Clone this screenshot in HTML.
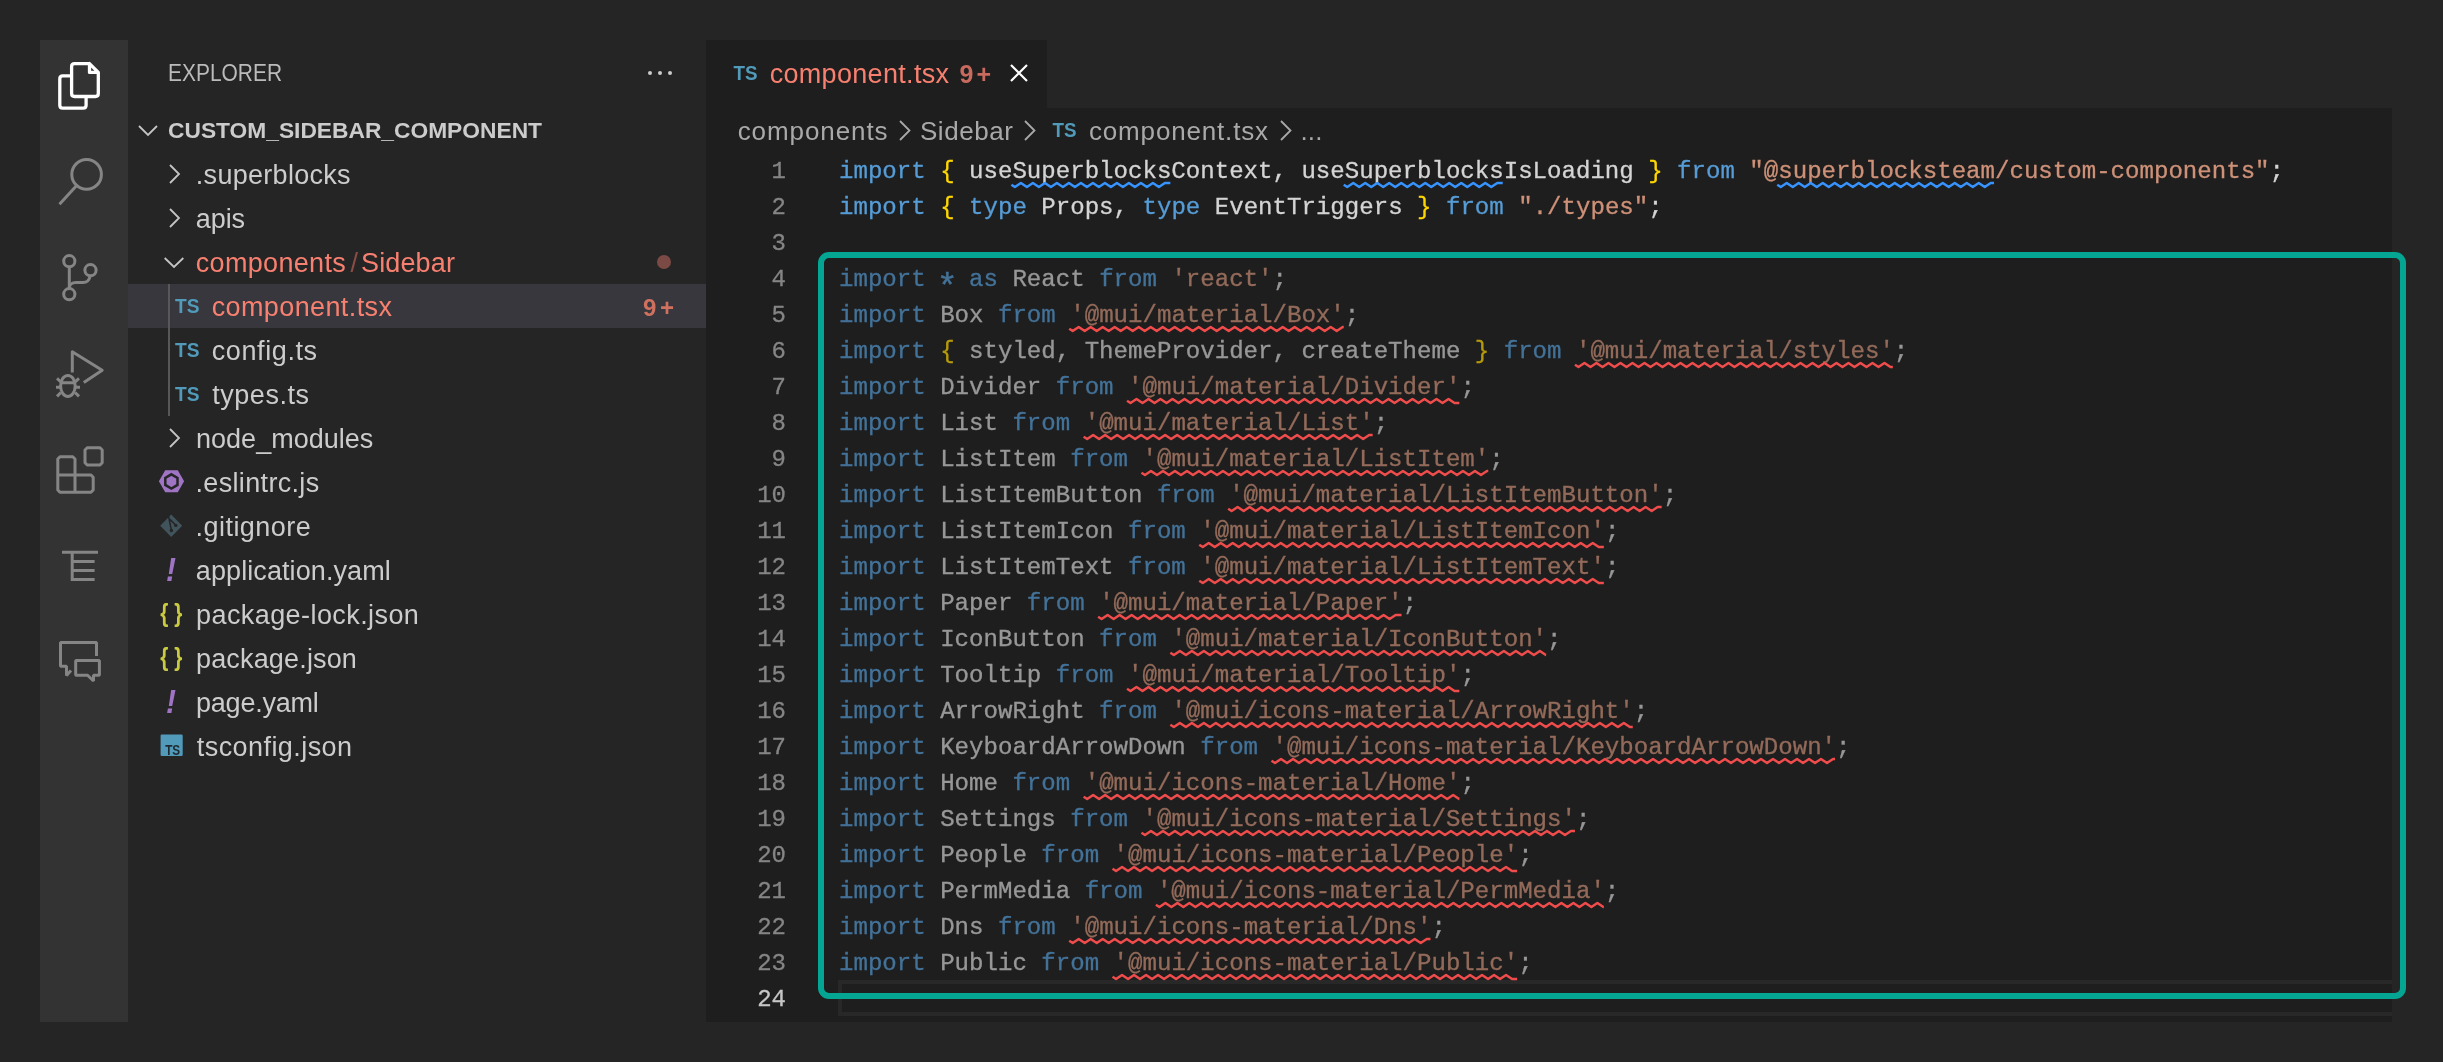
<!DOCTYPE html>
<html><head><meta charset="utf-8">
<style>
html,body{margin:0;padding:0;}
body{width:2443px;height:1062px;background:#252526;position:relative;overflow:hidden;font-family:"Liberation Sans",sans-serif;}
.abs{position:absolute;}
#act{left:40px;top:40px;width:88px;height:982px;background:#333333;}
#side{left:128px;top:40px;width:578px;height:982px;background:#252526;}
#tabs{left:706px;top:40px;width:1686px;height:68px;background:#252526;}
#tab{left:706px;top:40px;width:341px;height:68px;background:#1e1e1e;}
#ed{left:706px;top:108px;width:1686px;height:914px;background:#1e1e1e;}
.st{position:absolute;white-space:pre;font-size:26px;color:#cccccc;line-height:44px;height:44px;}
.ln{position:absolute;left:839px;height:36px;line-height:36px;white-space:pre;font-family:"Liberation Mono",monospace;font-size:24.08px;-webkit-text-stroke:0.3px;}
.num{position:absolute;left:706px;width:80px;-webkit-text-stroke:0.3px;text-align:right;height:36px;line-height:36px;font-family:"Liberation Mono",monospace;font-size:24px;color:#858585;}
.num.act{color:#c6c6c6;}
.k{color:#569cd6}.t{color:#d4d4d4}.y{color:#ffd700}.s{color:#ce9178}
.dim span{opacity:0.667}
.bc{position:absolute;top:108px;height:46px;line-height:46px;font-size:26px;color:#a9a9a9;white-space:pre;}
.ts{position:absolute;font-weight:bold;color:#519aba;font-size:19px;letter-spacing:0px;}
</style></head><body>
<div id="wrap" style="position:absolute;left:0;top:0;width:2443px;height:1062px;will-change:transform">
<div id="act" class="abs"></div>
<div id="side" class="abs"></div>
<div id="tabs" class="abs"></div>
<div id="tab" class="abs"></div>
<div id="ed" class="abs"></div>

<!-- current line border -->
<div class="abs" style="left:838px;top:980px;width:1554px;height:36px;box-sizing:border-box;border:4px solid #282828;border-right:none;"></div>
<div class="abs" style="left:706px;top:108px;width:1686px;height:0px;"></div>

<!-- sidebar texts -->
<div class="abs" style="left:128px;top:284px;width:578px;height:44px;background:#37373d;"></div>
<div class="abs" style="left:168px;top:284px;width:2px;height:132px;background:#585858;"></div>
<div class="abs" style="left:656.8px;top:254.8px;width:14.4px;height:14.4px;border-radius:50%;background:#7c4a45;"></div>

<!-- tab -->

<!-- breadcrumbs -->

<div class="ln" style="top:154px"><span class="k">import</span><span class="t"> </span><span class="y">{</span><span class="t"> useSuperblocksContext, useSuperblocksIsLoading </span><span class="y">}</span><span class="t"> </span><span class="k">from</span><span class="t"> </span><span class="s">&quot;@superblocksteam/custom-components&quot;</span><span class="t">;</span></div>
<div class="num" style="top:154px">1</div>
<div class="ln" style="top:190px"><span class="k">import</span><span class="t"> </span><span class="y">{</span><span class="t"> </span><span class="k">type</span><span class="t"> Props, </span><span class="k">type</span><span class="t"> EventTriggers </span><span class="y">}</span><span class="t"> </span><span class="k">from</span><span class="t"> </span><span class="s">&quot;./types&quot;</span><span class="t">;</span></div>
<div class="num" style="top:190px">2</div>
<div class="ln" style="top:226px"></div>
<div class="num" style="top:226px">3</div>
<div class="ln dim" style="top:262px"><span class="k">import</span><span class="t"> </span><span class="k" style="display:inline-block;transform:translateY(9.2px) scale(1.45)">*</span><span class="t"> </span><span class="k">as</span><span class="t"> React </span><span class="k">from</span><span class="t"> </span><span class="s">&#x27;react&#x27;</span><span class="t">;</span></div>
<div class="num" style="top:262px">4</div>
<div class="ln dim" style="top:298px"><span class="k">import</span><span class="t"> </span><span class="t">Box</span><span class="t"> </span><span class="k">from</span><span class="t"> </span><span class="s">&#x27;@mui/material/Box&#x27;</span><span class="t">;</span></div>
<div class="num" style="top:298px">5</div>
<div class="ln dim" style="top:334px"><span class="k">import</span><span class="t"> </span><span class="y">{</span><span class="t"> styled, ThemeProvider, createTheme </span><span class="y">}</span><span class="t"> </span><span class="k">from</span><span class="t"> </span><span class="s">&#x27;@mui/material/styles&#x27;</span><span class="t">;</span></div>
<div class="num" style="top:334px">6</div>
<div class="ln dim" style="top:370px"><span class="k">import</span><span class="t"> </span><span class="t">Divider</span><span class="t"> </span><span class="k">from</span><span class="t"> </span><span class="s">&#x27;@mui/material/Divider&#x27;</span><span class="t">;</span></div>
<div class="num" style="top:370px">7</div>
<div class="ln dim" style="top:406px"><span class="k">import</span><span class="t"> </span><span class="t">List</span><span class="t"> </span><span class="k">from</span><span class="t"> </span><span class="s">&#x27;@mui/material/List&#x27;</span><span class="t">;</span></div>
<div class="num" style="top:406px">8</div>
<div class="ln dim" style="top:442px"><span class="k">import</span><span class="t"> </span><span class="t">ListItem</span><span class="t"> </span><span class="k">from</span><span class="t"> </span><span class="s">&#x27;@mui/material/ListItem&#x27;</span><span class="t">;</span></div>
<div class="num" style="top:442px">9</div>
<div class="ln dim" style="top:478px"><span class="k">import</span><span class="t"> </span><span class="t">ListItemButton</span><span class="t"> </span><span class="k">from</span><span class="t"> </span><span class="s">&#x27;@mui/material/ListItemButton&#x27;</span><span class="t">;</span></div>
<div class="num" style="top:478px">10</div>
<div class="ln dim" style="top:514px"><span class="k">import</span><span class="t"> </span><span class="t">ListItemIcon</span><span class="t"> </span><span class="k">from</span><span class="t"> </span><span class="s">&#x27;@mui/material/ListItemIcon&#x27;</span><span class="t">;</span></div>
<div class="num" style="top:514px">11</div>
<div class="ln dim" style="top:550px"><span class="k">import</span><span class="t"> </span><span class="t">ListItemText</span><span class="t"> </span><span class="k">from</span><span class="t"> </span><span class="s">&#x27;@mui/material/ListItemText&#x27;</span><span class="t">;</span></div>
<div class="num" style="top:550px">12</div>
<div class="ln dim" style="top:586px"><span class="k">import</span><span class="t"> </span><span class="t">Paper</span><span class="t"> </span><span class="k">from</span><span class="t"> </span><span class="s">&#x27;@mui/material/Paper&#x27;</span><span class="t">;</span></div>
<div class="num" style="top:586px">13</div>
<div class="ln dim" style="top:622px"><span class="k">import</span><span class="t"> </span><span class="t">IconButton</span><span class="t"> </span><span class="k">from</span><span class="t"> </span><span class="s">&#x27;@mui/material/IconButton&#x27;</span><span class="t">;</span></div>
<div class="num" style="top:622px">14</div>
<div class="ln dim" style="top:658px"><span class="k">import</span><span class="t"> </span><span class="t">Tooltip</span><span class="t"> </span><span class="k">from</span><span class="t"> </span><span class="s">&#x27;@mui/material/Tooltip&#x27;</span><span class="t">;</span></div>
<div class="num" style="top:658px">15</div>
<div class="ln dim" style="top:694px"><span class="k">import</span><span class="t"> </span><span class="t">ArrowRight</span><span class="t"> </span><span class="k">from</span><span class="t"> </span><span class="s">&#x27;@mui/icons-material/ArrowRight&#x27;</span><span class="t">;</span></div>
<div class="num" style="top:694px">16</div>
<div class="ln dim" style="top:730px"><span class="k">import</span><span class="t"> </span><span class="t">KeyboardArrowDown</span><span class="t"> </span><span class="k">from</span><span class="t"> </span><span class="s">&#x27;@mui/icons-material/KeyboardArrowDown&#x27;</span><span class="t">;</span></div>
<div class="num" style="top:730px">17</div>
<div class="ln dim" style="top:766px"><span class="k">import</span><span class="t"> </span><span class="t">Home</span><span class="t"> </span><span class="k">from</span><span class="t"> </span><span class="s">&#x27;@mui/icons-material/Home&#x27;</span><span class="t">;</span></div>
<div class="num" style="top:766px">18</div>
<div class="ln dim" style="top:802px"><span class="k">import</span><span class="t"> </span><span class="t">Settings</span><span class="t"> </span><span class="k">from</span><span class="t"> </span><span class="s">&#x27;@mui/icons-material/Settings&#x27;</span><span class="t">;</span></div>
<div class="num" style="top:802px">19</div>
<div class="ln dim" style="top:838px"><span class="k">import</span><span class="t"> </span><span class="t">People</span><span class="t"> </span><span class="k">from</span><span class="t"> </span><span class="s">&#x27;@mui/icons-material/People&#x27;</span><span class="t">;</span></div>
<div class="num" style="top:838px">20</div>
<div class="ln dim" style="top:874px"><span class="k">import</span><span class="t"> </span><span class="t">PermMedia</span><span class="t"> </span><span class="k">from</span><span class="t"> </span><span class="s">&#x27;@mui/icons-material/PermMedia&#x27;</span><span class="t">;</span></div>
<div class="num" style="top:874px">21</div>
<div class="ln dim" style="top:910px"><span class="k">import</span><span class="t"> </span><span class="t">Dns</span><span class="t"> </span><span class="k">from</span><span class="t"> </span><span class="s">&#x27;@mui/icons-material/Dns&#x27;</span><span class="t">;</span></div>
<div class="num" style="top:910px">22</div>
<div class="ln dim" style="top:946px"><span class="k">import</span><span class="t"> </span><span class="t">Public</span><span class="t"> </span><span class="k">from</span><span class="t"> </span><span class="s">&#x27;@mui/icons-material/Public&#x27;</span><span class="t">;</span></div>
<div class="num" style="top:946px">23</div>
<div class="ln" style="top:982px"></div>
<div class="num act" style="top:982px">24</div>

<svg class="abs" style="left:0;top:0" width="2443" height="1062" viewBox="0 0 2443 1062">
<defs>
<pattern id="sqr" patternUnits="userSpaceOnUse" width="12" height="6" x="0" y="0"><g fill="#f14c4c"><polygon points="11,0 5,6 2.2,6 8.2,0"/><polygon points="8,0 12,4 12,1.2 10.8,0"/><polygon points="0,4 2,6 4.8,6 0,1.2"/></g></pattern>
<pattern id="sqb" patternUnits="userSpaceOnUse" width="12" height="6" x="0" y="0"><g fill="#3794ff"><polygon points="11,0 5,6 2.2,6 8.2,0"/><polygon points="8,0 12,4 12,1.2 10.8,0"/><polygon points="0,4 2,6 4.8,6 0,1.2"/></g></pattern>
</defs>
<path d="M1011.40 184.70 L1014.90 187.00 L1020.90 183.00 L1026.90 187.00 L1032.90 183.00 L1038.90 187.00 L1044.90 183.00 L1050.90 187.00 L1056.90 183.00 L1062.90 187.00 L1068.90 183.00 L1074.90 187.00 L1080.90 183.00 L1086.90 187.00 L1092.90 183.00 L1098.90 187.00 L1104.90 183.00 L1110.90 187.00 L1116.90 183.00 L1122.90 187.00 L1128.90 183.00 L1134.90 187.00 L1140.90 183.00 L1146.90 187.00 L1152.90 183.00 L1158.90 187.00 L1164.90 183.00 L1170.35 183.00" fill="none" stroke="#3794ff" stroke-width="2.5" stroke-linejoin="round"/>
<path d="M1343.75 184.70 L1347.25 187.00 L1353.25 183.00 L1359.25 187.00 L1365.25 183.00 L1371.25 187.00 L1377.25 183.00 L1383.25 187.00 L1389.25 183.00 L1395.25 187.00 L1401.25 183.00 L1407.25 187.00 L1413.25 183.00 L1419.25 187.00 L1425.25 183.00 L1431.25 187.00 L1437.25 183.00 L1443.25 187.00 L1449.25 183.00 L1455.25 187.00 L1461.25 183.00 L1467.25 187.00 L1473.25 183.00 L1479.25 187.00 L1485.25 183.00 L1491.25 187.00 L1497.25 183.00 L1502.70 183.00" fill="none" stroke="#3794ff" stroke-width="2.5" stroke-linejoin="round"/>
<path d="M1777.25 184.70 L1780.75 187.00 L1786.75 183.00 L1792.75 187.00 L1798.75 183.00 L1804.75 187.00 L1810.75 183.00 L1816.75 187.00 L1822.75 183.00 L1828.75 187.00 L1834.75 183.00 L1840.75 187.00 L1846.75 183.00 L1852.75 187.00 L1858.75 183.00 L1864.75 187.00 L1870.75 183.00 L1876.75 187.00 L1882.75 183.00 L1888.75 187.00 L1894.75 183.00 L1900.75 187.00 L1906.75 183.00 L1912.75 187.00 L1918.75 183.00 L1924.75 187.00 L1930.75 183.00 L1936.75 187.00 L1942.75 183.00 L1948.75 187.00 L1954.75 183.00 L1960.75 187.00 L1966.75 183.00 L1972.75 187.00 L1978.75 183.00 L1984.75 187.00 L1990.75 183.00 L1994.00 183.00" fill="none" stroke="#3794ff" stroke-width="2.5" stroke-linejoin="round"/>
<path d="M1069.20 328.70 L1072.70 331.00 L1078.70 327.00 L1084.70 331.00 L1090.70 327.00 L1096.70 331.00 L1102.70 327.00 L1108.70 331.00 L1114.70 327.00 L1120.70 331.00 L1126.70 327.00 L1132.70 331.00 L1138.70 327.00 L1144.70 331.00 L1150.70 327.00 L1156.70 331.00 L1162.70 327.00 L1168.70 331.00 L1174.70 327.00 L1180.70 331.00 L1186.70 327.00 L1192.70 331.00 L1198.70 327.00 L1204.70 331.00 L1210.70 327.00 L1216.70 331.00 L1222.70 327.00 L1228.70 331.00 L1234.70 327.00 L1240.70 331.00 L1246.70 327.00 L1252.70 331.00 L1258.70 327.00 L1264.70 331.00 L1270.70 327.00 L1276.70 331.00 L1282.70 327.00 L1288.70 331.00 L1294.70 327.00 L1300.70 331.00 L1306.70 327.00 L1312.70 331.00 L1318.70 327.00 L1324.70 331.00 L1330.70 327.00 L1336.70 331.00 L1342.70 327.00 L1343.75 327.00" fill="none" stroke="#f14c4c" stroke-width="2.5" stroke-linejoin="round"/>
<path d="M1574.95 364.70 L1578.45 367.00 L1584.45 363.00 L1590.45 367.00 L1596.45 363.00 L1602.45 367.00 L1608.45 363.00 L1614.45 367.00 L1620.45 363.00 L1626.45 367.00 L1632.45 363.00 L1638.45 367.00 L1644.45 363.00 L1650.45 367.00 L1656.45 363.00 L1662.45 367.00 L1668.45 363.00 L1674.45 367.00 L1680.45 363.00 L1686.45 367.00 L1692.45 363.00 L1698.45 367.00 L1704.45 363.00 L1710.45 367.00 L1716.45 363.00 L1722.45 367.00 L1728.45 363.00 L1734.45 367.00 L1740.45 363.00 L1746.45 367.00 L1752.45 363.00 L1758.45 367.00 L1764.45 363.00 L1770.45 367.00 L1776.45 363.00 L1782.45 367.00 L1788.45 363.00 L1794.45 367.00 L1800.45 363.00 L1806.45 367.00 L1812.45 363.00 L1818.45 367.00 L1824.45 363.00 L1830.45 367.00 L1836.45 363.00 L1842.45 367.00 L1848.45 363.00 L1854.45 367.00 L1860.45 363.00 L1866.45 367.00 L1872.45 363.00 L1878.45 367.00 L1884.45 363.00 L1890.45 367.00 L1892.85 367.00" fill="none" stroke="#f14c4c" stroke-width="2.5" stroke-linejoin="round"/>
<path d="M1127.00 400.70 L1130.50 403.00 L1136.50 399.00 L1142.50 403.00 L1148.50 399.00 L1154.50 403.00 L1160.50 399.00 L1166.50 403.00 L1172.50 399.00 L1178.50 403.00 L1184.50 399.00 L1190.50 403.00 L1196.50 399.00 L1202.50 403.00 L1208.50 399.00 L1214.50 403.00 L1220.50 399.00 L1226.50 403.00 L1232.50 399.00 L1238.50 403.00 L1244.50 399.00 L1250.50 403.00 L1256.50 399.00 L1262.50 403.00 L1268.50 399.00 L1274.50 403.00 L1280.50 399.00 L1286.50 403.00 L1292.50 399.00 L1298.50 403.00 L1304.50 399.00 L1310.50 403.00 L1316.50 399.00 L1322.50 403.00 L1328.50 399.00 L1334.50 403.00 L1340.50 399.00 L1346.50 403.00 L1352.50 399.00 L1358.50 403.00 L1364.50 399.00 L1370.50 403.00 L1376.50 399.00 L1382.50 403.00 L1388.50 399.00 L1394.50 403.00 L1400.50 399.00 L1406.50 403.00 L1412.50 399.00 L1418.50 403.00 L1424.50 399.00 L1430.50 403.00 L1436.50 399.00 L1442.50 403.00 L1448.50 399.00 L1454.50 403.00 L1459.35 403.00" fill="none" stroke="#f14c4c" stroke-width="2.5" stroke-linejoin="round"/>
<path d="M1083.65 436.70 L1087.15 439.00 L1093.15 435.00 L1099.15 439.00 L1105.15 435.00 L1111.15 439.00 L1117.15 435.00 L1123.15 439.00 L1129.15 435.00 L1135.15 439.00 L1141.15 435.00 L1147.15 439.00 L1153.15 435.00 L1159.15 439.00 L1165.15 435.00 L1171.15 439.00 L1177.15 435.00 L1183.15 439.00 L1189.15 435.00 L1195.15 439.00 L1201.15 435.00 L1207.15 439.00 L1213.15 435.00 L1219.15 439.00 L1225.15 435.00 L1231.15 439.00 L1237.15 435.00 L1243.15 439.00 L1249.15 435.00 L1255.15 439.00 L1261.15 435.00 L1267.15 439.00 L1273.15 435.00 L1279.15 439.00 L1285.15 435.00 L1291.15 439.00 L1297.15 435.00 L1303.15 439.00 L1309.15 435.00 L1315.15 439.00 L1321.15 435.00 L1327.15 439.00 L1333.15 435.00 L1339.15 439.00 L1345.15 435.00 L1351.15 439.00 L1357.15 435.00 L1363.15 439.00 L1369.15 435.00 L1372.65 435.00" fill="none" stroke="#f14c4c" stroke-width="2.5" stroke-linejoin="round"/>
<path d="M1141.45 472.70 L1144.95 475.00 L1150.95 471.00 L1156.95 475.00 L1162.95 471.00 L1168.95 475.00 L1174.95 471.00 L1180.95 475.00 L1186.95 471.00 L1192.95 475.00 L1198.95 471.00 L1204.95 475.00 L1210.95 471.00 L1216.95 475.00 L1222.95 471.00 L1228.95 475.00 L1234.95 471.00 L1240.95 475.00 L1246.95 471.00 L1252.95 475.00 L1258.95 471.00 L1264.95 475.00 L1270.95 471.00 L1276.95 475.00 L1282.95 471.00 L1288.95 475.00 L1294.95 471.00 L1300.95 475.00 L1306.95 471.00 L1312.95 475.00 L1318.95 471.00 L1324.95 475.00 L1330.95 471.00 L1336.95 475.00 L1342.95 471.00 L1348.95 475.00 L1354.95 471.00 L1360.95 475.00 L1366.95 471.00 L1372.95 475.00 L1378.95 471.00 L1384.95 475.00 L1390.95 471.00 L1396.95 475.00 L1402.95 471.00 L1408.95 475.00 L1414.95 471.00 L1420.95 475.00 L1426.95 471.00 L1432.95 475.00 L1438.95 471.00 L1444.95 475.00 L1450.95 471.00 L1456.95 475.00 L1462.95 471.00 L1468.95 475.00 L1474.95 471.00 L1480.95 475.00 L1486.95 471.00 L1488.25 471.00" fill="none" stroke="#f14c4c" stroke-width="2.5" stroke-linejoin="round"/>
<path d="M1228.15 508.70 L1231.65 511.00 L1237.65 507.00 L1243.65 511.00 L1249.65 507.00 L1255.65 511.00 L1261.65 507.00 L1267.65 511.00 L1273.65 507.00 L1279.65 511.00 L1285.65 507.00 L1291.65 511.00 L1297.65 507.00 L1303.65 511.00 L1309.65 507.00 L1315.65 511.00 L1321.65 507.00 L1327.65 511.00 L1333.65 507.00 L1339.65 511.00 L1345.65 507.00 L1351.65 511.00 L1357.65 507.00 L1363.65 511.00 L1369.65 507.00 L1375.65 511.00 L1381.65 507.00 L1387.65 511.00 L1393.65 507.00 L1399.65 511.00 L1405.65 507.00 L1411.65 511.00 L1417.65 507.00 L1423.65 511.00 L1429.65 507.00 L1435.65 511.00 L1441.65 507.00 L1447.65 511.00 L1453.65 507.00 L1459.65 511.00 L1465.65 507.00 L1471.65 511.00 L1477.65 507.00 L1483.65 511.00 L1489.65 507.00 L1495.65 511.00 L1501.65 507.00 L1507.65 511.00 L1513.65 507.00 L1519.65 511.00 L1525.65 507.00 L1531.65 511.00 L1537.65 507.00 L1543.65 511.00 L1549.65 507.00 L1555.65 511.00 L1561.65 507.00 L1567.65 511.00 L1573.65 507.00 L1579.65 511.00 L1585.65 507.00 L1591.65 511.00 L1597.65 507.00 L1603.65 511.00 L1609.65 507.00 L1615.65 511.00 L1621.65 507.00 L1627.65 511.00 L1633.65 507.00 L1639.65 511.00 L1645.65 507.00 L1651.65 511.00 L1657.65 507.00 L1661.65 507.00" fill="none" stroke="#f14c4c" stroke-width="2.5" stroke-linejoin="round"/>
<path d="M1199.25 544.70 L1202.75 547.00 L1208.75 543.00 L1214.75 547.00 L1220.75 543.00 L1226.75 547.00 L1232.75 543.00 L1238.75 547.00 L1244.75 543.00 L1250.75 547.00 L1256.75 543.00 L1262.75 547.00 L1268.75 543.00 L1274.75 547.00 L1280.75 543.00 L1286.75 547.00 L1292.75 543.00 L1298.75 547.00 L1304.75 543.00 L1310.75 547.00 L1316.75 543.00 L1322.75 547.00 L1328.75 543.00 L1334.75 547.00 L1340.75 543.00 L1346.75 547.00 L1352.75 543.00 L1358.75 547.00 L1364.75 543.00 L1370.75 547.00 L1376.75 543.00 L1382.75 547.00 L1388.75 543.00 L1394.75 547.00 L1400.75 543.00 L1406.75 547.00 L1412.75 543.00 L1418.75 547.00 L1424.75 543.00 L1430.75 547.00 L1436.75 543.00 L1442.75 547.00 L1448.75 543.00 L1454.75 547.00 L1460.75 543.00 L1466.75 547.00 L1472.75 543.00 L1478.75 547.00 L1484.75 543.00 L1490.75 547.00 L1496.75 543.00 L1502.75 547.00 L1508.75 543.00 L1514.75 547.00 L1520.75 543.00 L1526.75 547.00 L1532.75 543.00 L1538.75 547.00 L1544.75 543.00 L1550.75 547.00 L1556.75 543.00 L1562.75 547.00 L1568.75 543.00 L1574.75 547.00 L1580.75 543.00 L1586.75 547.00 L1592.75 543.00 L1598.75 547.00 L1603.85 547.00" fill="none" stroke="#f14c4c" stroke-width="2.5" stroke-linejoin="round"/>
<path d="M1199.25 580.70 L1202.75 583.00 L1208.75 579.00 L1214.75 583.00 L1220.75 579.00 L1226.75 583.00 L1232.75 579.00 L1238.75 583.00 L1244.75 579.00 L1250.75 583.00 L1256.75 579.00 L1262.75 583.00 L1268.75 579.00 L1274.75 583.00 L1280.75 579.00 L1286.75 583.00 L1292.75 579.00 L1298.75 583.00 L1304.75 579.00 L1310.75 583.00 L1316.75 579.00 L1322.75 583.00 L1328.75 579.00 L1334.75 583.00 L1340.75 579.00 L1346.75 583.00 L1352.75 579.00 L1358.75 583.00 L1364.75 579.00 L1370.75 583.00 L1376.75 579.00 L1382.75 583.00 L1388.75 579.00 L1394.75 583.00 L1400.75 579.00 L1406.75 583.00 L1412.75 579.00 L1418.75 583.00 L1424.75 579.00 L1430.75 583.00 L1436.75 579.00 L1442.75 583.00 L1448.75 579.00 L1454.75 583.00 L1460.75 579.00 L1466.75 583.00 L1472.75 579.00 L1478.75 583.00 L1484.75 579.00 L1490.75 583.00 L1496.75 579.00 L1502.75 583.00 L1508.75 579.00 L1514.75 583.00 L1520.75 579.00 L1526.75 583.00 L1532.75 579.00 L1538.75 583.00 L1544.75 579.00 L1550.75 583.00 L1556.75 579.00 L1562.75 583.00 L1568.75 579.00 L1574.75 583.00 L1580.75 579.00 L1586.75 583.00 L1592.75 579.00 L1598.75 583.00 L1603.85 583.00" fill="none" stroke="#f14c4c" stroke-width="2.5" stroke-linejoin="round"/>
<path d="M1098.10 616.70 L1101.60 619.00 L1107.60 615.00 L1113.60 619.00 L1119.60 615.00 L1125.60 619.00 L1131.60 615.00 L1137.60 619.00 L1143.60 615.00 L1149.60 619.00 L1155.60 615.00 L1161.60 619.00 L1167.60 615.00 L1173.60 619.00 L1179.60 615.00 L1185.60 619.00 L1191.60 615.00 L1197.60 619.00 L1203.60 615.00 L1209.60 619.00 L1215.60 615.00 L1221.60 619.00 L1227.60 615.00 L1233.60 619.00 L1239.60 615.00 L1245.60 619.00 L1251.60 615.00 L1257.60 619.00 L1263.60 615.00 L1269.60 619.00 L1275.60 615.00 L1281.60 619.00 L1287.60 615.00 L1293.60 619.00 L1299.60 615.00 L1305.60 619.00 L1311.60 615.00 L1317.60 619.00 L1323.60 615.00 L1329.60 619.00 L1335.60 615.00 L1341.60 619.00 L1347.60 615.00 L1353.60 619.00 L1359.60 615.00 L1365.60 619.00 L1371.60 615.00 L1377.60 619.00 L1383.60 615.00 L1389.60 619.00 L1395.60 615.00 L1401.55 615.00" fill="none" stroke="#f14c4c" stroke-width="2.5" stroke-linejoin="round"/>
<path d="M1170.35 652.70 L1173.85 655.00 L1179.85 651.00 L1185.85 655.00 L1191.85 651.00 L1197.85 655.00 L1203.85 651.00 L1209.85 655.00 L1215.85 651.00 L1221.85 655.00 L1227.85 651.00 L1233.85 655.00 L1239.85 651.00 L1245.85 655.00 L1251.85 651.00 L1257.85 655.00 L1263.85 651.00 L1269.85 655.00 L1275.85 651.00 L1281.85 655.00 L1287.85 651.00 L1293.85 655.00 L1299.85 651.00 L1305.85 655.00 L1311.85 651.00 L1317.85 655.00 L1323.85 651.00 L1329.85 655.00 L1335.85 651.00 L1341.85 655.00 L1347.85 651.00 L1353.85 655.00 L1359.85 651.00 L1365.85 655.00 L1371.85 651.00 L1377.85 655.00 L1383.85 651.00 L1389.85 655.00 L1395.85 651.00 L1401.85 655.00 L1407.85 651.00 L1413.85 655.00 L1419.85 651.00 L1425.85 655.00 L1431.85 651.00 L1437.85 655.00 L1443.85 651.00 L1449.85 655.00 L1455.85 651.00 L1461.85 655.00 L1467.85 651.00 L1473.85 655.00 L1479.85 651.00 L1485.85 655.00 L1491.85 651.00 L1497.85 655.00 L1503.85 651.00 L1509.85 655.00 L1515.85 651.00 L1521.85 655.00 L1527.85 651.00 L1533.85 655.00 L1539.85 651.00 L1545.85 655.00 L1546.05 655.00" fill="none" stroke="#f14c4c" stroke-width="2.5" stroke-linejoin="round"/>
<path d="M1127.00 688.70 L1130.50 691.00 L1136.50 687.00 L1142.50 691.00 L1148.50 687.00 L1154.50 691.00 L1160.50 687.00 L1166.50 691.00 L1172.50 687.00 L1178.50 691.00 L1184.50 687.00 L1190.50 691.00 L1196.50 687.00 L1202.50 691.00 L1208.50 687.00 L1214.50 691.00 L1220.50 687.00 L1226.50 691.00 L1232.50 687.00 L1238.50 691.00 L1244.50 687.00 L1250.50 691.00 L1256.50 687.00 L1262.50 691.00 L1268.50 687.00 L1274.50 691.00 L1280.50 687.00 L1286.50 691.00 L1292.50 687.00 L1298.50 691.00 L1304.50 687.00 L1310.50 691.00 L1316.50 687.00 L1322.50 691.00 L1328.50 687.00 L1334.50 691.00 L1340.50 687.00 L1346.50 691.00 L1352.50 687.00 L1358.50 691.00 L1364.50 687.00 L1370.50 691.00 L1376.50 687.00 L1382.50 691.00 L1388.50 687.00 L1394.50 691.00 L1400.50 687.00 L1406.50 691.00 L1412.50 687.00 L1418.50 691.00 L1424.50 687.00 L1430.50 691.00 L1436.50 687.00 L1442.50 691.00 L1448.50 687.00 L1454.50 691.00 L1459.35 691.00" fill="none" stroke="#f14c4c" stroke-width="2.5" stroke-linejoin="round"/>
<path d="M1170.35 724.70 L1173.85 727.00 L1179.85 723.00 L1185.85 727.00 L1191.85 723.00 L1197.85 727.00 L1203.85 723.00 L1209.85 727.00 L1215.85 723.00 L1221.85 727.00 L1227.85 723.00 L1233.85 727.00 L1239.85 723.00 L1245.85 727.00 L1251.85 723.00 L1257.85 727.00 L1263.85 723.00 L1269.85 727.00 L1275.85 723.00 L1281.85 727.00 L1287.85 723.00 L1293.85 727.00 L1299.85 723.00 L1305.85 727.00 L1311.85 723.00 L1317.85 727.00 L1323.85 723.00 L1329.85 727.00 L1335.85 723.00 L1341.85 727.00 L1347.85 723.00 L1353.85 727.00 L1359.85 723.00 L1365.85 727.00 L1371.85 723.00 L1377.85 727.00 L1383.85 723.00 L1389.85 727.00 L1395.85 723.00 L1401.85 727.00 L1407.85 723.00 L1413.85 727.00 L1419.85 723.00 L1425.85 727.00 L1431.85 723.00 L1437.85 727.00 L1443.85 723.00 L1449.85 727.00 L1455.85 723.00 L1461.85 727.00 L1467.85 723.00 L1473.85 727.00 L1479.85 723.00 L1485.85 727.00 L1491.85 723.00 L1497.85 727.00 L1503.85 723.00 L1509.85 727.00 L1515.85 723.00 L1521.85 727.00 L1527.85 723.00 L1533.85 727.00 L1539.85 723.00 L1545.85 727.00 L1551.85 723.00 L1557.85 727.00 L1563.85 723.00 L1569.85 727.00 L1575.85 723.00 L1581.85 727.00 L1587.85 723.00 L1593.85 727.00 L1599.85 723.00 L1605.85 727.00 L1611.85 723.00 L1617.85 727.00 L1623.85 723.00 L1629.85 727.00 L1632.75 727.00" fill="none" stroke="#f14c4c" stroke-width="2.5" stroke-linejoin="round"/>
<path d="M1271.50 760.70 L1275.00 763.00 L1281.00 759.00 L1287.00 763.00 L1293.00 759.00 L1299.00 763.00 L1305.00 759.00 L1311.00 763.00 L1317.00 759.00 L1323.00 763.00 L1329.00 759.00 L1335.00 763.00 L1341.00 759.00 L1347.00 763.00 L1353.00 759.00 L1359.00 763.00 L1365.00 759.00 L1371.00 763.00 L1377.00 759.00 L1383.00 763.00 L1389.00 759.00 L1395.00 763.00 L1401.00 759.00 L1407.00 763.00 L1413.00 759.00 L1419.00 763.00 L1425.00 759.00 L1431.00 763.00 L1437.00 759.00 L1443.00 763.00 L1449.00 759.00 L1455.00 763.00 L1461.00 759.00 L1467.00 763.00 L1473.00 759.00 L1479.00 763.00 L1485.00 759.00 L1491.00 763.00 L1497.00 759.00 L1503.00 763.00 L1509.00 759.00 L1515.00 763.00 L1521.00 759.00 L1527.00 763.00 L1533.00 759.00 L1539.00 763.00 L1545.00 759.00 L1551.00 763.00 L1557.00 759.00 L1563.00 763.00 L1569.00 759.00 L1575.00 763.00 L1581.00 759.00 L1587.00 763.00 L1593.00 759.00 L1599.00 763.00 L1605.00 759.00 L1611.00 763.00 L1617.00 759.00 L1623.00 763.00 L1629.00 759.00 L1635.00 763.00 L1641.00 759.00 L1647.00 763.00 L1653.00 759.00 L1659.00 763.00 L1665.00 759.00 L1671.00 763.00 L1677.00 759.00 L1683.00 763.00 L1689.00 759.00 L1695.00 763.00 L1701.00 759.00 L1707.00 763.00 L1713.00 759.00 L1719.00 763.00 L1725.00 759.00 L1731.00 763.00 L1737.00 759.00 L1743.00 763.00 L1749.00 759.00 L1755.00 763.00 L1761.00 759.00 L1767.00 763.00 L1773.00 759.00 L1779.00 763.00 L1785.00 759.00 L1791.00 763.00 L1797.00 759.00 L1803.00 763.00 L1809.00 759.00 L1815.00 763.00 L1821.00 759.00 L1827.00 763.00 L1833.00 759.00 L1835.05 759.00" fill="none" stroke="#f14c4c" stroke-width="2.5" stroke-linejoin="round"/>
<path d="M1083.65 796.70 L1087.15 799.00 L1093.15 795.00 L1099.15 799.00 L1105.15 795.00 L1111.15 799.00 L1117.15 795.00 L1123.15 799.00 L1129.15 795.00 L1135.15 799.00 L1141.15 795.00 L1147.15 799.00 L1153.15 795.00 L1159.15 799.00 L1165.15 795.00 L1171.15 799.00 L1177.15 795.00 L1183.15 799.00 L1189.15 795.00 L1195.15 799.00 L1201.15 795.00 L1207.15 799.00 L1213.15 795.00 L1219.15 799.00 L1225.15 795.00 L1231.15 799.00 L1237.15 795.00 L1243.15 799.00 L1249.15 795.00 L1255.15 799.00 L1261.15 795.00 L1267.15 799.00 L1273.15 795.00 L1279.15 799.00 L1285.15 795.00 L1291.15 799.00 L1297.15 795.00 L1303.15 799.00 L1309.15 795.00 L1315.15 799.00 L1321.15 795.00 L1327.15 799.00 L1333.15 795.00 L1339.15 799.00 L1345.15 795.00 L1351.15 799.00 L1357.15 795.00 L1363.15 799.00 L1369.15 795.00 L1375.15 799.00 L1381.15 795.00 L1387.15 799.00 L1393.15 795.00 L1399.15 799.00 L1405.15 795.00 L1411.15 799.00 L1417.15 795.00 L1423.15 799.00 L1429.15 795.00 L1435.15 799.00 L1441.15 795.00 L1447.15 799.00 L1453.15 795.00 L1459.15 799.00 L1459.35 799.00" fill="none" stroke="#f14c4c" stroke-width="2.5" stroke-linejoin="round"/>
<path d="M1141.45 832.70 L1144.95 835.00 L1150.95 831.00 L1156.95 835.00 L1162.95 831.00 L1168.95 835.00 L1174.95 831.00 L1180.95 835.00 L1186.95 831.00 L1192.95 835.00 L1198.95 831.00 L1204.95 835.00 L1210.95 831.00 L1216.95 835.00 L1222.95 831.00 L1228.95 835.00 L1234.95 831.00 L1240.95 835.00 L1246.95 831.00 L1252.95 835.00 L1258.95 831.00 L1264.95 835.00 L1270.95 831.00 L1276.95 835.00 L1282.95 831.00 L1288.95 835.00 L1294.95 831.00 L1300.95 835.00 L1306.95 831.00 L1312.95 835.00 L1318.95 831.00 L1324.95 835.00 L1330.95 831.00 L1336.95 835.00 L1342.95 831.00 L1348.95 835.00 L1354.95 831.00 L1360.95 835.00 L1366.95 831.00 L1372.95 835.00 L1378.95 831.00 L1384.95 835.00 L1390.95 831.00 L1396.95 835.00 L1402.95 831.00 L1408.95 835.00 L1414.95 831.00 L1420.95 835.00 L1426.95 831.00 L1432.95 835.00 L1438.95 831.00 L1444.95 835.00 L1450.95 831.00 L1456.95 835.00 L1462.95 831.00 L1468.95 835.00 L1474.95 831.00 L1480.95 835.00 L1486.95 831.00 L1492.95 835.00 L1498.95 831.00 L1504.95 835.00 L1510.95 831.00 L1516.95 835.00 L1522.95 831.00 L1528.95 835.00 L1534.95 831.00 L1540.95 835.00 L1546.95 831.00 L1552.95 835.00 L1558.95 831.00 L1564.95 835.00 L1570.95 831.00 L1574.95 831.00" fill="none" stroke="#f14c4c" stroke-width="2.5" stroke-linejoin="round"/>
<path d="M1112.55 868.70 L1116.05 871.00 L1122.05 867.00 L1128.05 871.00 L1134.05 867.00 L1140.05 871.00 L1146.05 867.00 L1152.05 871.00 L1158.05 867.00 L1164.05 871.00 L1170.05 867.00 L1176.05 871.00 L1182.05 867.00 L1188.05 871.00 L1194.05 867.00 L1200.05 871.00 L1206.05 867.00 L1212.05 871.00 L1218.05 867.00 L1224.05 871.00 L1230.05 867.00 L1236.05 871.00 L1242.05 867.00 L1248.05 871.00 L1254.05 867.00 L1260.05 871.00 L1266.05 867.00 L1272.05 871.00 L1278.05 867.00 L1284.05 871.00 L1290.05 867.00 L1296.05 871.00 L1302.05 867.00 L1308.05 871.00 L1314.05 867.00 L1320.05 871.00 L1326.05 867.00 L1332.05 871.00 L1338.05 867.00 L1344.05 871.00 L1350.05 867.00 L1356.05 871.00 L1362.05 867.00 L1368.05 871.00 L1374.05 867.00 L1380.05 871.00 L1386.05 867.00 L1392.05 871.00 L1398.05 867.00 L1404.05 871.00 L1410.05 867.00 L1416.05 871.00 L1422.05 867.00 L1428.05 871.00 L1434.05 867.00 L1440.05 871.00 L1446.05 867.00 L1452.05 871.00 L1458.05 867.00 L1464.05 871.00 L1470.05 867.00 L1476.05 871.00 L1482.05 867.00 L1488.05 871.00 L1494.05 867.00 L1500.05 871.00 L1506.05 867.00 L1512.05 871.00 L1517.15 871.00" fill="none" stroke="#f14c4c" stroke-width="2.5" stroke-linejoin="round"/>
<path d="M1155.90 904.70 L1159.40 907.00 L1165.40 903.00 L1171.40 907.00 L1177.40 903.00 L1183.40 907.00 L1189.40 903.00 L1195.40 907.00 L1201.40 903.00 L1207.40 907.00 L1213.40 903.00 L1219.40 907.00 L1225.40 903.00 L1231.40 907.00 L1237.40 903.00 L1243.40 907.00 L1249.40 903.00 L1255.40 907.00 L1261.40 903.00 L1267.40 907.00 L1273.40 903.00 L1279.40 907.00 L1285.40 903.00 L1291.40 907.00 L1297.40 903.00 L1303.40 907.00 L1309.40 903.00 L1315.40 907.00 L1321.40 903.00 L1327.40 907.00 L1333.40 903.00 L1339.40 907.00 L1345.40 903.00 L1351.40 907.00 L1357.40 903.00 L1363.40 907.00 L1369.40 903.00 L1375.40 907.00 L1381.40 903.00 L1387.40 907.00 L1393.40 903.00 L1399.40 907.00 L1405.40 903.00 L1411.40 907.00 L1417.40 903.00 L1423.40 907.00 L1429.40 903.00 L1435.40 907.00 L1441.40 903.00 L1447.40 907.00 L1453.40 903.00 L1459.40 907.00 L1465.40 903.00 L1471.40 907.00 L1477.40 903.00 L1483.40 907.00 L1489.40 903.00 L1495.40 907.00 L1501.40 903.00 L1507.40 907.00 L1513.40 903.00 L1519.40 907.00 L1525.40 903.00 L1531.40 907.00 L1537.40 903.00 L1543.40 907.00 L1549.40 903.00 L1555.40 907.00 L1561.40 903.00 L1567.40 907.00 L1573.40 903.00 L1579.40 907.00 L1585.40 903.00 L1591.40 907.00 L1597.40 903.00 L1603.40 907.00 L1603.85 907.00" fill="none" stroke="#f14c4c" stroke-width="2.5" stroke-linejoin="round"/>
<path d="M1069.20 940.70 L1072.70 943.00 L1078.70 939.00 L1084.70 943.00 L1090.70 939.00 L1096.70 943.00 L1102.70 939.00 L1108.70 943.00 L1114.70 939.00 L1120.70 943.00 L1126.70 939.00 L1132.70 943.00 L1138.70 939.00 L1144.70 943.00 L1150.70 939.00 L1156.70 943.00 L1162.70 939.00 L1168.70 943.00 L1174.70 939.00 L1180.70 943.00 L1186.70 939.00 L1192.70 943.00 L1198.70 939.00 L1204.70 943.00 L1210.70 939.00 L1216.70 943.00 L1222.70 939.00 L1228.70 943.00 L1234.70 939.00 L1240.70 943.00 L1246.70 939.00 L1252.70 943.00 L1258.70 939.00 L1264.70 943.00 L1270.70 939.00 L1276.70 943.00 L1282.70 939.00 L1288.70 943.00 L1294.70 939.00 L1300.70 943.00 L1306.70 939.00 L1312.70 943.00 L1318.70 939.00 L1324.70 943.00 L1330.70 939.00 L1336.70 943.00 L1342.70 939.00 L1348.70 943.00 L1354.70 939.00 L1360.70 943.00 L1366.70 939.00 L1372.70 943.00 L1378.70 939.00 L1384.70 943.00 L1390.70 939.00 L1396.70 943.00 L1402.70 939.00 L1408.70 943.00 L1414.70 939.00 L1420.70 943.00 L1426.70 939.00 L1430.45 939.00" fill="none" stroke="#f14c4c" stroke-width="2.5" stroke-linejoin="round"/>
<path d="M1112.55 976.70 L1116.05 979.00 L1122.05 975.00 L1128.05 979.00 L1134.05 975.00 L1140.05 979.00 L1146.05 975.00 L1152.05 979.00 L1158.05 975.00 L1164.05 979.00 L1170.05 975.00 L1176.05 979.00 L1182.05 975.00 L1188.05 979.00 L1194.05 975.00 L1200.05 979.00 L1206.05 975.00 L1212.05 979.00 L1218.05 975.00 L1224.05 979.00 L1230.05 975.00 L1236.05 979.00 L1242.05 975.00 L1248.05 979.00 L1254.05 975.00 L1260.05 979.00 L1266.05 975.00 L1272.05 979.00 L1278.05 975.00 L1284.05 979.00 L1290.05 975.00 L1296.05 979.00 L1302.05 975.00 L1308.05 979.00 L1314.05 975.00 L1320.05 979.00 L1326.05 975.00 L1332.05 979.00 L1338.05 975.00 L1344.05 979.00 L1350.05 975.00 L1356.05 979.00 L1362.05 975.00 L1368.05 979.00 L1374.05 975.00 L1380.05 979.00 L1386.05 975.00 L1392.05 979.00 L1398.05 975.00 L1404.05 979.00 L1410.05 975.00 L1416.05 979.00 L1422.05 975.00 L1428.05 979.00 L1434.05 975.00 L1440.05 979.00 L1446.05 975.00 L1452.05 979.00 L1458.05 975.00 L1464.05 979.00 L1470.05 975.00 L1476.05 979.00 L1482.05 975.00 L1488.05 979.00 L1494.05 975.00 L1500.05 979.00 L1506.05 975.00 L1512.05 979.00 L1517.15 979.00" fill="none" stroke="#f14c4c" stroke-width="2.5" stroke-linejoin="round"/>
<text id="explorer" x="168.00" y="81.00" font-family="Liberation Sans" font-size="23" font-weight="normal" fill="#bbbbbb" textLength="114.00" lengthAdjust="spacingAndGlyphs" xml:space="preserve">EXPLORER</text>
<text id="root" x="168.00" y="138.30" font-family="Liberation Sans" font-size="22" font-weight="bold" fill="#cccccc" textLength="374.00" lengthAdjust="spacingAndGlyphs" xml:space="preserve">CUSTOM_SIDEBAR_COMPONENT</text>
<text id="sb" x="195.80" y="184.00" font-family="Liberation Sans" font-size="27" font-weight="normal" fill="#cccccc" textLength="154.80" lengthAdjust="spacing" xml:space="preserve">.superblocks</text>
<text id="apis" x="195.70" y="228.00" font-family="Liberation Sans" font-size="27" font-weight="normal" fill="#cccccc" textLength="49.40" lengthAdjust="spacing" xml:space="preserve">apis</text>
<text id="comps" x="195.70" y="272.00" font-family="Liberation Sans" font-size="27" font-weight="normal" fill="#f88070" textLength="150.10" lengthAdjust="spacing" xml:space="preserve">components</text>
<text id="slash" x="350.60" y="272.00" font-family="Liberation Sans" font-size="27" font-weight="normal" fill="#8c4b45" textLength="9.40" lengthAdjust="spacing" xml:space="preserve">/</text>
<text id="sidebar" x="361.10" y="272.00" font-family="Liberation Sans" font-size="27" font-weight="normal" fill="#f88070" textLength="93.80" lengthAdjust="spacing" xml:space="preserve">Sidebar</text>
<text id="comptsx" x="211.70" y="316.00" font-family="Liberation Sans" font-size="27" font-weight="normal" fill="#f88070" textLength="180.20" lengthAdjust="spacing" xml:space="preserve">component.tsx</text>
<text id="nine" x="643.00" y="316.00" font-family="Liberation Sans" font-size="24" font-weight="bold" fill="#d0705f" textLength="31.00" lengthAdjust="spacing" xml:space="preserve">9+</text>
<text id="config" x="211.70" y="360.00" font-family="Liberation Sans" font-size="27" font-weight="normal" fill="#cccccc" textLength="105.40" lengthAdjust="spacing" xml:space="preserve">config.ts</text>
<text id="types" x="212.20" y="404.00" font-family="Liberation Sans" font-size="27" font-weight="normal" fill="#cccccc" textLength="96.80" lengthAdjust="spacing" xml:space="preserve">types.ts</text>
<text id="nodem" x="196.00" y="448.00" font-family="Liberation Sans" font-size="27" font-weight="normal" fill="#cccccc" textLength="177.30" lengthAdjust="spacing" xml:space="preserve">node_modules</text>
<text id="eslint" x="195.50" y="492.00" font-family="Liberation Sans" font-size="27" font-weight="normal" fill="#cccccc" textLength="123.70" lengthAdjust="spacing" xml:space="preserve">.eslintrc.js</text>
<text id="gitig" x="195.50" y="536.00" font-family="Liberation Sans" font-size="27" font-weight="normal" fill="#cccccc" textLength="115.30" lengthAdjust="spacing" xml:space="preserve">.gitignore</text>
<text id="appy" x="195.80" y="580.00" font-family="Liberation Sans" font-size="27" font-weight="normal" fill="#cccccc" textLength="195.00" lengthAdjust="spacing" xml:space="preserve">application.yaml</text>
<text id="plock" x="196.00" y="624.00" font-family="Liberation Sans" font-size="27" font-weight="normal" fill="#cccccc" textLength="222.90" lengthAdjust="spacing" xml:space="preserve">package-lock.json</text>
<text id="pjson" x="196.00" y="668.00" font-family="Liberation Sans" font-size="27" font-weight="normal" fill="#cccccc" textLength="160.90" lengthAdjust="spacing" xml:space="preserve">package.json</text>
<text id="pagey" x="196.00" y="712.00" font-family="Liberation Sans" font-size="27" font-weight="normal" fill="#cccccc" textLength="122.80" lengthAdjust="spacing" xml:space="preserve">page.yaml</text>
<text id="tscfg" x="196.80" y="756.00" font-family="Liberation Sans" font-size="27" font-weight="normal" fill="#cccccc" textLength="155.30" lengthAdjust="spacing" xml:space="preserve">tsconfig.json</text>
<text id="tabname" x="769.70" y="82.70" font-family="Liberation Sans" font-size="27" font-weight="normal" fill="#f88070" textLength="179.30" lengthAdjust="spacing" xml:space="preserve">component.tsx</text>
<text id="tab9" x="959.50" y="82.70" font-family="Liberation Sans" font-size="25" font-weight="bold" fill="#c86a5e" textLength="31.50" lengthAdjust="spacing" xml:space="preserve">9+</text>
<text id="bc1" x="737.70" y="139.90" font-family="Liberation Sans" font-size="26" font-weight="normal" fill="#a9a9a9" textLength="149.90" lengthAdjust="spacing" xml:space="preserve">components</text>
<text id="bc2" x="919.90" y="139.90" font-family="Liberation Sans" font-size="26" font-weight="normal" fill="#a9a9a9" textLength="93.10" lengthAdjust="spacing" xml:space="preserve">Sidebar</text>
<text id="bc3" x="1089.00" y="139.90" font-family="Liberation Sans" font-size="26" font-weight="normal" fill="#a9a9a9" textLength="179.00" lengthAdjust="spacing" xml:space="preserve">component.tsx</text>
<text id="bc4" x="1300.40" y="139.90" font-family="Liberation Sans" font-size="26" font-weight="normal" fill="#a9a9a9" textLength="22.00" lengthAdjust="spacing" xml:space="preserve">...</text>
<g font-family="Liberation Sans" font-weight="bold" font-size="20" fill="#519aba">
<text x="175" y="313" textLength="24.5" lengthAdjust="spacingAndGlyphs">TS</text>
<text x="175" y="357" textLength="24.5" lengthAdjust="spacingAndGlyphs">TS</text>
<text x="175" y="401" textLength="24.5" lengthAdjust="spacingAndGlyphs">TS</text>
<text x="733.5" y="79.7" textLength="24" lengthAdjust="spacingAndGlyphs">TS</text>
<text x="1052.5" y="136.5" textLength="24" lengthAdjust="spacingAndGlyphs">TS</text>
</g>
<!-- activity icons -->
<g fill="none" stroke="#ffffff" stroke-width="3.3" stroke-linejoin="round">
<path d="M71.6 75.8 H62.8 Q59.8 75.8 59.8 78.8 V105.2 Q59.8 108.2 62.8 108.2 H83.1 Q86.1 108.2 86.1 105.2 V96.5"/>
<path d="M89.5 63.6 H74.6 Q71.6 63.6 71.6 66.6 V93.5 Q71.6 96.5 74.6 96.5 H95.3 Q98.3 96.5 98.3 93.5 V72.4 L89.5 63.6 V72.4 H98.3"/>
</g>
<g fill="none" stroke="#858585" stroke-width="3" stroke-linejoin="round">
<circle cx="86.6" cy="174.4" r="14.8"/>
<path d="M76.2 186 L59.5 204.3"/>
<circle cx="69.3" cy="261.2" r="5.6"/>
<circle cx="69.3" cy="294.2" r="5.6"/>
<circle cx="90.5" cy="270.2" r="5.6"/>
<path d="M69.3 266.8 V288.6"/>
<path d="M90.2 275.8 C89 281 87 282.4 83 282.4 H76 C72 282.4 69.3 284.5 69.3 288"/>
<path d="M72.3 372.5 V351.8 L102.2 370.3 L83.8 382.6"/>
<ellipse cx="67.9" cy="385.9" rx="7.3" ry="10.5"/>
<path d="M60.6 382.7 H75.2 M56 387.2 H60.6 M75.2 387.2 H80 M57 378.4 L60.9 381.8 M79 378.4 L75.1 381.8 M57 396.4 L60.9 392.5 M79 396.4 L75.1 392.5"/>
<path d="M60 456.8 H72.8 L75 459 V475 H91 L93.2 477.2 V490 L91 492.2 H60 L57.8 490 V459 Z M57.8 475 H75 V492.2"/>
<path d="M87.2 447.8 H100 L102.2 450 V462.8 L100 465 H87.2 L85 462.8 V450 Z"/>
<path stroke-linejoin="miter" d="M62 552.2 H98 M72.2 552.2 V579.5 H94.6 M72.2 561.5 H94.6 M72.2 570.5 H94.6"/>
<path stroke-linejoin="bevel" d="M96.5 656 V642.6 H60.5 V666.3 H66.5 V675.5 L71 670.5"/>
<path stroke-linejoin="bevel" d="M75.7 660.5 H99.4 V675.2 H93.5 V681 L87.6 675.2 H75.7 Z"/>
</g>
<!-- sidebar chevrons -->
<g fill="none" stroke="#c5c5c5" stroke-width="1.8">
<path d="M139 126 L148 135 L157 126"/>
<path d="M170 165 L179 174 L170 183"/>
<path d="M170 209 L179 218 L170 227"/>
<path d="M164.7 258 L174 267 L183.3 258"/>
<path d="M170 429 L179 438 L170 447"/>
</g>
<!-- breadcrumb chevrons -->
<g fill="none" stroke="#a9a9a9" stroke-width="1.8">
<path d="M900 121 L909.5 130.5 L900 140"/>
<path d="M1025 121 L1034.5 130.5 L1025 140"/>
<path d="M1281 121 L1290.5 130.5 L1281 140"/>
</g>
<!-- tab close -->
<path d="M1011 65 L1027 81 M1027 65 L1011 81" stroke="#ffffff" stroke-width="2.2" fill="none"/>
<!-- explorer more dots -->
<g fill="#cccccc"><circle cx="650" cy="73" r="2"/><circle cx="660" cy="73" r="2"/><circle cx="670" cy="73" r="2"/></g>
<!-- file icons -->
<polygon points="158.9,481.2 165.2,470.2 177.8,470.2 184.1,481.2 177.8,492.2 165.2,492.2" fill="#a074c4"/>
<polygon points="171.4,474.3 177.5,477.85 177.5,484.95 171.4,488.5 165.3,484.95 165.3,477.85" fill="none" stroke="#252526" stroke-width="2.5" stroke-linejoin="miter"/>
<polygon points="171.2,514.5 182.2,525.7 171.2,536.9 160.2,525.7" fill="#41535b"/>
<g stroke="#252526" stroke-width="1.5" fill="none"><path d="M168.6 516.4 L171.4 530.3 M169.9 519.4 L175.8 525.3"/></g>
<g fill="#252526"><circle cx="171.4" cy="530.5" r="1.7"/><circle cx="175.8" cy="525.4" r="1.7"/></g>
<text x="166" y="581" font-family="Liberation Sans" font-weight="bold" font-style="italic" font-size="33" fill="#a074c4" textLength="10" lengthAdjust="spacingAndGlyphs">!</text>
<text x="166" y="713" font-family="Liberation Sans" font-weight="bold" font-style="italic" font-size="33" fill="#a074c4" textLength="10" lengthAdjust="spacingAndGlyphs">!</text>
<text x="160.3" y="621.5" font-family="Liberation Sans" font-weight="bold" font-size="26" fill="#cbcb41" textLength="22" lengthAdjust="spacingAndGlyphs">{ }</text>
<text x="160.3" y="665.5" font-family="Liberation Sans" font-weight="bold" font-size="26" fill="#cbcb41" textLength="22" lengthAdjust="spacingAndGlyphs">{ }</text>
<rect x="160.6" y="734.6" width="22.1" height="21.4" rx="1.2" fill="#519aba"/>
<text x="165.2" y="755" font-family="Liberation Sans" font-weight="bold" font-size="14" fill="#1e2a30" textLength="15" lengthAdjust="spacingAndGlyphs">TS</text>
<!-- teal box -->
<rect x="821" y="255" width="1582" height="741" rx="8" fill="none" stroke="#04a693" stroke-width="6"/>
</svg>
</div>
</body></html>
